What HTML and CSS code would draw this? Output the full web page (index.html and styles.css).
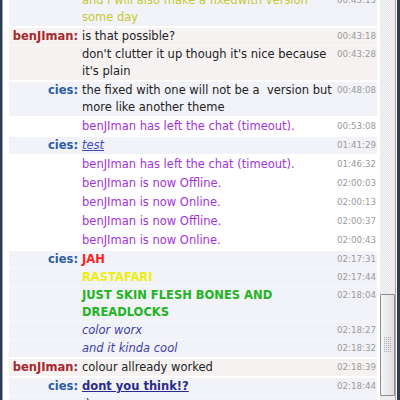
FILE: index.html
```html
<!DOCTYPE html>
<html>
<head>
<meta charset="utf-8">
<link rel="stylesheet" href="styles.css">
</head>
<body>
<div class="window">
  <div class="log">
    <div class="scroll">
      <div class="group cies">
        <div class="row"><span class="nick"></span><span class="msg yellowish">and i will also make a fixedwith version some day</span><span class="ts">00:43:15</span></div>
      </div>
      <div class="group benj">
        <div class="row"><span class="nick">benJIman:</span><span class="msg">is that possible?</span><span class="ts">00:43:18</span></div>
        <div class="row"><span class="nick"></span><span class="msg">don't clutter it up though it's nice because it's plain</span><span class="ts">00:43:28</span></div>
      </div>
      <div class="group cies">
        <div class="row"><span class="nick">cies:</span><span class="msg">the fixed with one will not be a&nbsp; version but more like another theme</span><span class="ts">00:48:08</span></div>
      </div>
      <div class="group sys">
        <div class="row"><span class="nick"></span><span class="msg purple">benJIman has left the chat (timeout).</span><span class="ts">00:53:08</span></div>
      </div>
      <div class="group cies">
        <div class="row"><span class="nick">cies:</span><span class="msg"><span class="test">test</span></span><span class="ts">01:41:29</span></div>
      </div>
      <div class="group sys">
        <div class="row"><span class="nick"></span><span class="msg purple">benJIman has left the chat (timeout).</span><span class="ts">01:46:32</span></div>
      </div>
      <div class="group sys">
        <div class="row"><span class="nick"></span><span class="msg purple">benJIman is now Offline.</span><span class="ts">02:00:03</span></div>
      </div>
      <div class="group sys">
        <div class="row"><span class="nick"></span><span class="msg purple">benJIman is now Online.</span><span class="ts">02:00:13</span></div>
      </div>
      <div class="group sys">
        <div class="row"><span class="nick"></span><span class="msg purple">benJIman is now Offline.</span><span class="ts">02:00:37</span></div>
      </div>
      <div class="group sys">
        <div class="row"><span class="nick"></span><span class="msg purple">benJIman is now Online.</span><span class="ts">02:00:43</span></div>
      </div>
      <div class="group cies">
        <div class="row"><span class="nick">cies:</span><span class="msg red">JAH</span><span class="ts">02:17:31</span></div>
        <div class="row"><span class="nick"></span><span class="msg yellow">RASTAFARI</span><span class="ts">02:17:44</span></div>
        <div class="row"><span class="nick"></span><span class="msg green">JUST SKIN FLESH BONES AND DREADLOCKS</span><span class="ts">02:18:04</span></div>
        <div class="row"><span class="nick"></span><span class="msg blueit">color worx</span><span class="ts">02:18:27</span></div>
        <div class="row"><span class="nick"></span><span class="msg blueit">and it kinda cool</span><span class="ts">02:18:32</span></div>
      </div>
      <div class="group benj">
        <div class="row"><span class="nick">benJIman:</span><span class="msg">colour allready worked</span><span class="ts">02:18:39</span></div>
      </div>
      <div class="group cies">
        <div class="row"><span class="nick">cies:</span><span class="msg"><span class="think">dont you think!?</span></span><span class="ts">02:18:44</span></div>
        <div class="row"><span class="nick"></span><span class="msg">:)</span><span class="ts">02:18:49</span></div>
      </div>
    </div>
  </div>
  <div class="vscroll">
    <div class="track">
      <div class="thumb"><span class="grip"></span></div>
    </div>
  </div>
</div>
</body>
</html>
```

FILE: styles.css
```css
html, body {
  margin: 0;
  padding: 0;
  background: #ffffff;
}

.window {
  display: flex;
  width: 400px;
  height: 400px;
  box-sizing: border-box;
  border-left: 2px solid #2d3b57;
  border-right: 3px solid #2d3b57;
  overflow: hidden;
  font-family: "DejaVu Sans", sans-serif;
}

.log {
  flex: 1;
  overflow: hidden;
  border-left: 1px solid #9aa3b5;
  padding: 0 3px 0 6px;
  background: #ffffff;
}

.scroll {
  margin-top: -8px;
  display: flex;
  flex-direction: column;
  gap: 2px;
}

.group.cies { background: #f2f3f9; }
.group.benj { background: #f6f2f2; }
.group.sys { background: #ffffff; }

.row {
  display: grid;
  grid-template-columns: 69px 1fr 38px;
  column-gap: 3px;
  padding: 0 2px 0 0;
  font-size: 11.5px;
  line-height: 17px;
  color: #222222;
}

.row + .row {
  border-top: 1px dotted #ffffff;
}

.msg {
  padding-left: 1px;
}

.nick {
  text-align: right;
  font-weight: bold;
}

.cies .nick { color: #2c5da6; }
.benj .nick { color: #a5282c; }

.ts {
  font-size: 8.7px;
  color: #9b9b9b;
  line-height: 17px;
  text-align: right;
  white-space: nowrap;
}

.yellowish { color: #c8c832; }
.purple { color: #a233d9; }
.test { font-style: italic; text-decoration: underline; color: #3c49c2; }
.red { color: #ff2222; font-weight: bold; }
.yellow { color: #eeee11; font-weight: bold; }
.green { color: #22b422; font-weight: bold; }
.blueit { color: #3d3da6; font-style: italic; }
.think { color: #2a2a8c; font-weight: bold; text-decoration: underline; }

.vscroll {
  width: 16px;
  display: flex;
  border-right: 1px solid #ffffff;
}

.track {
  flex: 1;
  display: flex;
  flex-direction: column;
  justify-content: flex-end;
  border-right: 1px solid #a8a8a8;
  background-color: #eeeeee;
  background-image: repeating-conic-gradient(#e6e6e6 0 25%, #f4f4f4 0 50%);
  background-size: 2px 2px;
  padding-bottom: 4px;
}

.thumb {
  height: 102px;
  box-sizing: border-box;
  border: 1px solid #8c8c8c;
  border-radius: 1px;
  background: linear-gradient(to right, #f6f6f8, #dedee4);
  display: flex;
  align-items: center;
  justify-content: center;
}

.grip {
  width: 9px;
  height: 16px;
  background-image: conic-gradient(#a8a8b0 0 25%, transparent 0);
  background-size: 2px 2px;
}
```
